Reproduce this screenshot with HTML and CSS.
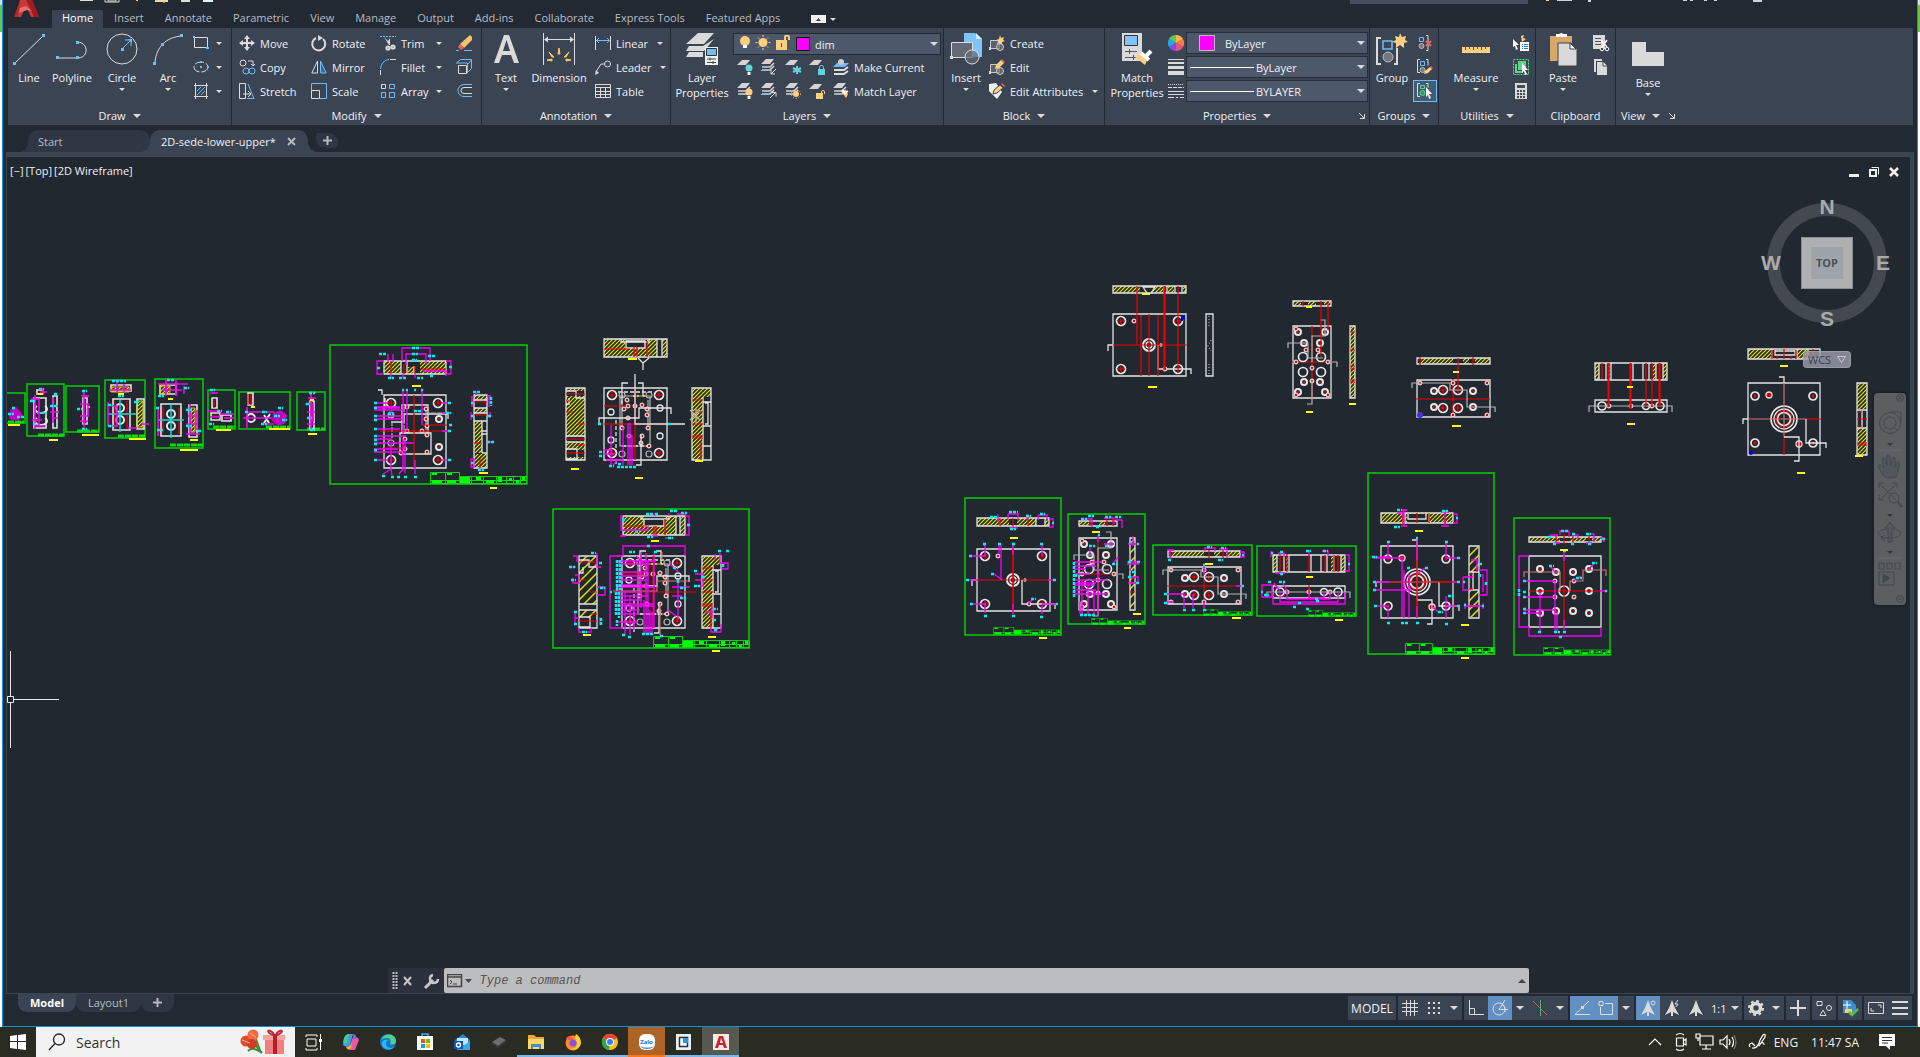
FILE: index.html
```html
<!DOCTYPE html>
<html lang="en">
<head>
<meta charset="utf-8">
<title>2D-sede-lower-upper</title>
<link rel="stylesheet" href="styles.css">
</head>
<body>
<div class="app">
  <header class="titlebar">
    <svg class="logo" viewBox="0 0 26 18" aria-label="Application menu"><path d="M6 0L0 17h6l4-10 4-7z" fill="#b3262a"/><path d="M6 0h12l7 17h-8L12 6 7 17H4z" fill="#c8393b"/><path d="M12 0l3 6 5 11h5L18 0z" fill="#a11c22"/><path d="M6 8l6-2 6 5-5-1-8 3z" fill="#e4716c"/></svg>
    <svg class="qat" width="140" height="4"><path d="M0 0h13v1H0zM75 0h13v2H75zM101 0h9v2H101z" fill="#dcdcdc"/><path d="M25 0v2h14V0M28 0v1h8V0" stroke="#dcdcdc" fill="none"/><path d="M56 0h2v1h-2zM75 0h8v1h-8zM81 0l3 3 3-3z" fill="#ffce72"/><path d="M123 0h10v2h-10z" fill="#dff0ff"/></svg>
    <div class="help-search"></div>
    <svg class="qat" width="220" height="4"><path d="M18 0h3v1h-3z" fill="#ffce72"/><path d="M29 0h15v1H29zM60 0h3v2h-3zM155 0h4v1h-4zM162 0h3v1h-3zM176 0h3v1h-3zM186 0h3v1h-3zM225 0h9v2h-9z" fill="#cfd2d6"/></svg>
  </header>
  <nav class="tabs">
    <button class="tab on">Home</button><button class="tab">Insert</button><button class="tab">Annotate</button><button class="tab">Parametric</button><button class="tab">View</button><button class="tab">Manage</button><button class="tab">Output</button><button class="tab">Add-ins</button><button class="tab">Collaborate</button><button class="tab">Express Tools</button><button class="tab">Featured Apps</button>
    <button class="minribbon" aria-label="Minimize ribbon"><svg width="15" height="8"><path d="M0 0h15v8H0z" fill="#f0f0f0"/><path d="M5 6l2.5-3L10 6z" fill="#444"/></svg><i class="arr"></i></button>
  </nav>

  <section class="ribbon">
    <div class="panel p-draw">
      <div class="body">
        <button class="big w40"><svg class="i32"><path class="l" d="M2 30L30 3"/><path class="b" d="M0 29h3v3H0zM29 1h3v3h-3z"/></svg><span>Line</span></button>
        <button class="big w46"><svg class="i32"><path class="l" d="M2 25h19M21 9c12 0 12 16 1 16"/><path class="b" d="M0 23h3v3H0zM20 23h3v3h-3zM20 8h3v3h-3z"/></svg><span>Polyline</span></button>
        <button class="big w54"><svg class="i32"><circle class="l" cx="16" cy="16" r="15"/><path class="bl" d="M16 16l8-8M19 7h6v6"/><path class="b" d="M15 15h3v3h-3zM22 6h4v4z"/></svg><span>Circle</span><i class="arr"></i></button>
        <button class="big w38"><svg class="i32"><path class="l" d="M3 30C4 14 14 4 30 3"/><path class="b" d="M1 29h3v3H1zM9 10h3v3H9zM28 1h3v3h-3z"/></svg><span>Arc</span><i class="arr"></i></button>
        <div class="col c-draw">
          <button class="sm"><svg class="i16"><path class="l" d="M1.500 2.500h13v10h-13z"/><path class="b" d="M0 1h2v2H0zM13 12h3v2h-3z"/></svg><i class="arr"></i></button>
          <button class="sm"><svg class="i16"><ellipse class="l" cx="8" cy="8" rx="7" ry="5" stroke-dasharray="9 2"/><path class="b" d="M7 2h2v2H7zM7 7h2v2H7zM14 7h2v2h-2z"/></svg><i class="arr"></i></button>
          <button class="sm"><svg class="i16"><path class="l" d="M1 2.500h14M1 13.500h14M2.500 0v16M13.500 0v16"/><path class="bl" d="M4 8l4-4M4 12l8-8M8 12l4-4"/></svg><i class="arr"></i></button>
        </div>
      </div>
      <button class="ptitle">Draw<i class="arr lg"></i></button>
    </div>

    <div class="panel p-modify">
      <div class="body">
        <div class="col w72">
          <button class="sm"><svg class="i16"><path class="l2" d="M8 1v14M1 8h14"/><path class="g" d="M8 0l3 4H5zM8 16l3-4H5zM0 8l4-3v6zM16 8l-4-3v6z"/></svg>Move</button>
          <button class="sm"><svg class="i16"><circle class="l" cx="4" cy="4" r="3"/><path class="l" d="M9 2h5v4M12 5l2 2 2-2"/><circle class="bl" cx="7" cy="12" r="3"/><circle class="bl" cx="13" cy="12" r="3"/></svg>Copy</button>
          <button class="sm"><svg class="i16"><path class="l" d="M.5.5h6v15h-6zM4 11h7M9 8l3 3-3 3"/><path class="bl" d="M9 1l6 14.500H8"/></svg>Stretch</button>
        </div>
        <div class="col w69">
          <button class="sm"><svg class="i16"><path class="l2" d="M5 3a6.500 6.500 0 1 0 7 1"/><path class="g" d="M7 0l5 3-5 3z"/></svg>Rotate</button>
          <button class="sm"><svg class="i16"><path class="l" d="M6.500 2v12H.8z"/><path class="bl" fill="#376a94" d="M9.500 2v12h5.700z"/></svg>Mirror</button>
          <button class="sm"><svg class="i16"><path class="bl" d="M.5 7V.5h15v15H9"/><path class="l" d="M.5 7.500h8v8h-8z"/></svg>Scale</button>
        </div>
        <div class="col w76">
          <button class="sm"><svg class="i16"><path class="bl" d="M0 1.500h16" stroke-dasharray="2 1"/><path class="g" d="M4 2l5 8 1 0V3l-2 3z"/><circle class="l2" cx="8" cy="13" r="1.600"/><circle class="l2" cx="13" cy="12" r="1.600"/></svg>Trim<i class="arr push"></i></button>
          <button class="sm"><svg class="i16"><path class="bl" d="M.5 10C1 5 4 1 9 .5"/><path class="l" d="M10 .5h6M.5 11v5"/></svg>Fillet<i class="arr push"></i></button>
          <button class="sm"><svg class="i16"><path class="l" d="M1.500 1.500h4v4h-4z"/><path class="bl" d="M9.500 1.500h5v4h-5zM1.500 9.500h4v5h-4zM9.500 9.500h5v5h-5z"/></svg>Array<i class="arr push"></i></button>
        </div>
        <div class="col">
          <button class="sm"><svg class="i16"><path d="M14 0l2 2v3l-8 8-4-4z" fill="#f5c36c"/><path d="M4 9l4 4-3 2-3-3z" fill="#f0625f"/><path class="bl" d="M0 15.500h3M8 15.500h8"/></svg></button>
          <button class="sm"><svg class="i16"><path class="l" d="M2.500 6.500h8v8h-8z"/><path class="bl" d="M.5 4l4-3.500h11v9l-4 4M12 5l3.500-4M.5 4h11v10"/></svg></button>
          <button class="sm"><svg class="i16"><path class="bl" d="M16 1.500H8a6 6 0 0 0 0 12h8"/><path class="l" d="M16 4.500H8a3 3 0 0 0 0 6h8"/></svg></button>
        </div>
      </div>
      <button class="ptitle">Modify<i class="arr lg"></i></button>
    </div>

    <div class="panel p-annot">
      <div class="body">
        <button class="big w46"><svg class="i32"><path class="g" d="M14 2h5l10 28h-5l-3-8h-9l-3 8H4zm2.500 5L13 18h7z"/></svg><span>Text</span><i class="arr"></i></button>
        <button class="big w60"><svg class="i32"><path class="l" d="M.5 0v32M31.500 0v32M3 6.500h26"/><path class="g" d="M1 6.500l4-3v6zM31 6.500l-4-3v6z"/><path d="M15 21l1-6 1 6zM11 24l-5-5 3 5zM21 24l5-5-3 5zM9 28l-5-1 5-1zM23 28l5-1-5-1z" fill="#ffc766" stroke="#ffc766"/></svg><span>Dimension</span></button>
        <div class="col">
          <button class="sm"><svg class="i16"><path class="l" d="M.5 1v14M15.500 1v14"/><path class="bl" d="M1 5.500h14M4 3L1.500 5.500 4 8M12 3l2.500 2.500L12 8"/></svg>Linear<i class="arr"></i></button>
          <button class="sm"><svg class="i16"><circle class="l" cx="12.500" cy="5" r="3"/><path class="l" d="M9.500 5H6L1 13"/><path class="g" d="M0 16l1-5 3 3z"/></svg>Leader<i class="arr"></i></button>
          <button class="sm"><svg class="i16"><path class="l" d="M.5 1.500h15v13H.5zM0 4.500h16M0 8.500h16M0 11.500h16M5.500 5v10M10.500 5v10"/></svg>Table</button>
        </div>
      </div>
      <button class="ptitle">Annotation<i class="arr lg"></i></button>
    </div>

    <div class="panel p-layers">
      <div class="body">
        <button class="big w60"><svg class="i32"><path class="g" d="M12 0h16L18 11H0zM3 13h14l11-7-10 12H0zM3 19h14v5H0z"/><path d="M19 14h13v18H19z" fill="#efefef"/><path d="M20.500 15.500h10v7h-10z" fill="#6fbdf8" stroke="#333"/><path d="M21 26h9M21 29.500h9M24 24.500v3M27 28v3" stroke="#444"/></svg><span>Layer<br>Properties</span></button>
        <div class="stack">
          <label class="combo"><svg width="74" height="18"><circle cx="6" cy="6" r="5" fill="#ffcf80"/><path d="M4 10h4v3H4z" fill="#fff"/><circle cx="24" cy="7.500" r="4.500" fill="#ffcf80"/><path d="M24 0v2M24 13v2M16.500 7.500h2M29.500 7.500h2M19 2.500l1 1M28 11.500l1 1M29 2.500l-1 1M20 11.500l-1 1" stroke="#ffcf80"/><path d="M37 5h11v10H37zM42 8v4h1V8z" fill="#ffcf80" fill-rule="evenodd"/><path d="M46 5V2.500q0-2 2-2t2 2V5" fill="none" stroke="#ffcf80" stroke-width="2"/><path d="M57.500 2.500h13v13h-13z" fill="#f0f" stroke="#111"/></svg><select aria-label="Layer"><option>dim</option></select><i class="arr lg"></i></label>
          <div class="row">
            <button class="ic"><svg class="i16"><use href="#lay1"/><circle cx="12" cy="9" r="3.500" fill="#63d3dc"/><path d="M10.500 13h3v3h-3z" fill="#fff"/></svg></button>
            <button class="ic"><svg class="i16"><use href="#lay3"/><path class="bl" d="M0 11.500h9"/><path class="l" d="M15 10l-5 5M10 11v4h4"/></svg></button>
            <button class="ic"><svg class="i16"><use href="#lay1"/><path d="M12 7v8M8 9l8 4M16 9l-8 4" stroke="#63d3dc" stroke-width="2"/></svg></button>
            <button class="ic"><svg class="i16"><use href="#lay1"/><path d="M9 10h7v6H9z" fill="#63d3dc"/><path d="M10.500 10V8.500a2 2 0 0 1 4 0V10" stroke="#63d3dc" fill="none"/></svg></button>
            <button class="sm"><svg class="i16"><path d="M0 8L4 4h12l-4 4z" fill="#6fbdf8"/><circle cx="8" cy="3" r="3" fill="#ccc"/><path class="l2" d="M1 11h10l4-3M1 15h10l4-3"/></svg>Make Current</button>
          </div>
          <div class="row">
            <button class="ic"><svg class="i16"><use href="#lay3"/><circle cx="12" cy="9" r="3.500" fill="#ffcf80"/><path d="M10.500 13h3v3h-3z" fill="#fff"/></svg></button>
            <button class="ic"><svg class="i16"><use href="#lay3"/><path class="bl" d="M0 11.500h9"/><path class="l" d="M9 15l5-5M10 9.500h5v4"/></svg></button>
            <button class="ic"><svg class="i16"><use href="#lay3"/><circle cx="11" cy="11" r="3" fill="#ffcf80"/><circle cx="11" cy="11" r="4.500" stroke="#ffcf80" fill="none" stroke-dasharray="1 2"/></svg></button>
            <button class="ic"><svg class="i16"><use href="#lay1"/><path d="M7 10h7v6H7z" fill="#ffcf80"/><path d="M12.500 10V9a1.500 1.500 0 0 1 3 0v2" stroke="#ffcf80" fill="none"/></svg></button>
            <button class="sm"><svg class="i16"><use href="#lay3"/><path d="M8 8l3-1 4 4-2 4z" fill="#ffcf80"/><path d="M9 7l3 3 3-2" stroke="#fff" stroke-width="2" fill="none"/></svg>Match Layer</button>
          </div>
        </div>
      </div>
      <button class="ptitle">Layers<i class="arr lg"></i></button>
    </div>

    <div class="panel p-block">
      <div class="body">
        <button class="big w42"><svg class="i32"><path d="M14 0h11l7 6v18H14z" fill="#7cc4fa"/><path d="M26 0v6h6z" fill="#d6ecff"/><path d="M1.500 9.500h21v15h-21z" fill="#646975" stroke="#ddd"/><circle cx="22" cy="24" r="7" fill="#646975" fill-opacity=".7" stroke="#ddd"/><path class="g" d="M0 23h3v3H0z"/></svg><span>Insert</span><i class="arr"></i></button>
        <div class="col">
          <button class="sm"><svg class="i16"><use href="#blk"/><path d="M11 0l1 3 3-1-1 3 2 1-3 1 0 3-2-2-3 1 1-3-2-1 3-1z" fill="#ffcf80"/></svg>Create</button>
          <button class="sm"><svg class="i16"><use href="#blk"/><path d="M6 10l1-4 5-5 3 3-5 5z" fill="#ffcf80"/><path d="M12 1l1-1 3 3-1 1z" fill="#f0625f"/></svg>Edit</button>
          <button class="sm"><svg class="i16"><path d="M0 1l7-1 6 9-5 7-8-8z" fill="#eee"/><path d="M4 11l1-4 6-5 3 3-6 5z" fill="#ffcf80" stroke="#3b4453"/><path d="M12 1l1-1 3 3-1 1z" fill="#f0625f"/></svg>Edit Attributes<i class="arr"></i></button>
        </div>
      </div>
      <button class="ptitle">Block<i class="arr lg"></i></button>
    </div>

    <div class="panel p-props">
      <div class="body">
        <button class="big w62"><svg class="i32"><path class="g" d="M1 0h20v28H1z"/><path d="M3.500 2.500h13v10h-13z" fill="#7cc4fa" stroke="#333"/><path d="M4 18.500h12M4 24.500h12M8.500 16v5M12.500 22v5" stroke="#555"/><path d="M14 24l7-5 6 6-3 7z" fill="#ffcf80"/><path d="M20 20l8 7M25 23l5-5" stroke="#fff" stroke-width="4"/></svg><span>Match<br>Properties</span></button>
        <div class="col tight">
          <svg class="i16"><path d="M8 8V0a8 8 0 0 1 7 4z" fill="#ffb545"/><path d="M8 8l7-4a8 8 0 0 1 0 8z" fill="#ff7b45"/><path d="M8 8l7 4a8 8 0 0 1-7 4z" fill="#ef4f7f"/><path d="M8 8v8a8 8 0 0 1-7-4z" fill="#7d4df0"/><path d="M8 8l-7 4a8 8 0 0 1 0-8z" fill="#22a7e8"/><path d="M8 8L1 4a8 8 0 0 1 7-4z" fill="#5cc95c"/></svg>
          <svg class="i16"><path class="g" d="M0 0h16v1H0zM0 3h16v2H0zM0 7h16v3H0zM0 12h16v4H0z"/></svg>
          <svg class="i16"><path class="l" d="M0 1.500h16" stroke-dasharray="1 1"/><path class="l" d="M0 4.500h16" stroke-dasharray="4 1"/><path class="l" d="M0 8.500h16M0 11.500h16"/><path class="l" d="M0 14.500h16" stroke-dasharray="6 2 2 2"/></svg>
        </div>
        <div class="col combos">
          <label class="combo"><i class="swatch"></i><select aria-label="Colour"><option>ByLayer</option></select><i class="arr lg"></i></label>
          <label class="combo"><i class="rule"></i><select aria-label="Lineweight"><option>ByLayer</option></select><i class="arr lg"></i></label>
          <label class="combo"><i class="rule"></i><select aria-label="Linetype"><option>BYLAYER</option></select><i class="arr lg"></i></label>
        </div>
      </div>
      <button class="ptitle">Properties<i class="arr lg"></i></button>
      <button class="launch" aria-label="Properties dialog"><svg width="6" height="6"><path class="l" d="M0 0l5 5M5.500 1v4.500H1"/></svg></button>
    </div>

    <div class="panel p-groups">
      <div class="body">
        <button class="big w42"><svg class="i32"><path class="l2" d="M5 5H1v26h4M18 31h3V15" stroke="#fff"/><path class="bl" stroke-width="1.500" d="M7 8h9v8H7z"/><circle cx="12" cy="24" r="5" fill="#73777f" stroke="#bbb"/><path d="M24 0l2 4 4-1-1 4 3 2-4 1 0 5-4-3-4 3 0-5-4-1 4-2-1-4 4 1z" fill="#ffcf80"/></svg><span>Group</span></button>
        <div class="col">
          <button class="ic"><svg class="i16"><use href="#grp"/><path class="l" d="M9 .5h2v15H9"/><path d="M9 6l5 5M14 6l-5 5" stroke="#f0625f" stroke-width="2"/></svg></button>
          <button class="ic"><svg class="i16"><path class="l" d="M3 .5H.5v13H3M9 .5h2v6"/><use href="#grp" x="1"/><path d="M7 15l1-3 5-4 2 2-4 4z" fill="#ffcf80"/><path d="M13 8l1-1 2 2-1 1z" fill="#f0625f"/></svg></button>
          <button class="ic on"><svg class="i16"><path class="l" d="M3 .5H.5v13H3M9 .5h2v4"/><path d="M3.500 2.500h4v3h-4z" fill="none" stroke="#5fd38a"/><circle cx="5.500" cy="10" r="2.500" fill="#3f8f60" stroke="#5fd38a"/><path d="M9 4l6 7h-3l2 4-2 1-1-4-2 2z" fill="#fff"/></svg></button>
        </div>
      </div>
      <button class="ptitle">Groups<i class="arr lg"></i></button>
    </div>

    <div class="panel p-util">
      <div class="body">
        <button class="big w72"><svg class="i32"><path d="M2 14h28v6H2z" fill="#ffcf80"/><path d="M5.500 14v3M9.500 14v2M13.500 14v3M17.500 14v2M21.500 14v3M25.500 14v2" stroke="#5d5137"/></svg><span>Measure</span><i class="arr"></i></button>
        <div class="col">
          <button class="sm"><svg class="i16"><path d="M8 1l3-1-1 3 3 1-4 3z" fill="#ffcf80"/><path d="M0 4l6 6H3l2 4-2 1-1-4-2 1z" fill="#fff"/><path d="M7 7h9v9H7z" fill="#fff"/><path d="M9 9.500h1M11 9.500h4M9 11.500h1M11 11.500h4M9 13.500h1M11 13.500h4" stroke="#2c7cc4"/></svg></button>
          <button class="sm"><svg class="i16"><path d="M.5.5h15v15H.5z" fill="none" stroke="#5fd38a" stroke-dasharray="2 1"/><path d="M5 2h8v9H5z" fill="#5fd38a"/><path d="M3 5v8h7" stroke="#5fd38a" fill="none" stroke-width="2"/><path d="M9 4l6 7h-3l2 4-2 1-1-4-2 2z" fill="#fff"/></svg></button>
          <button class="sm"><svg class="i16"><path class="g" d="M2 0h12v16H2z"/><path d="M4 2h8v3H4zM4 7h2v2H4zM7 7h2v2H7zM10 7h2v2h-2zM4 10h2v2H4zM7 10h2v2H7zM10 10h2v2h-2zM4 13h2v2H4zM7 13h2v2H7zM10 13h2v2h-2z" fill="#444c59"/></svg></button>
        </div>
      </div>
      <button class="ptitle">Utilities<i class="arr lg"></i></button>
    </div>

    <div class="panel p-clip">
      <div class="body">
        <button class="big w52"><svg class="i32"><path d="M3 3h22v25H3z" fill="#d9a868"/><path d="M9 4V1h3l2-1 3 1h3v3z" fill="#fff"/><path d="M11 10h13l6 6v17H11z" fill="#d9d9d9" stroke="#3b4453"/><path d="M23 10v6h6z" fill="#fff" stroke="#3b4453"/></svg><span>Paste</span><i class="arr"></i></button>
        <div class="col">
          <button class="sm"><svg class="i16"><path class="g" d="M0 0h12v14H0z"/><path d="M2 3.500h6M2 6.500h6M2 9.500h6" stroke="#555"/><path d="M8 5l6 7M14 5l-5 7" stroke="#fff" stroke-width="1.500"/><circle cx="9" cy="14" r="1.800" stroke="#fff" fill="#3b4453"/><circle cx="14" cy="14" r="1.800" stroke="#fff" fill="#3b4453"/></svg></button>
          <button class="sm"><svg class="i16"><path class="g" d="M1 0h8v2H3v11H1z"/><path class="g" d="M4 3h6l4 4v9H4z"/><path d="M10 3v4h4" stroke="#3b4453" fill="#fff"/></svg></button>
        </div>
      </div>
      <div class="ptitle">Clipboard</div>
    </div>

    <div class="panel p-view">
      <div class="body">
        <button class="big w62 base"><svg class="i32"><path class="g" d="M0 4h14v10h18v14H0z"/></svg><span>Base</span><i class="arr"></i></button>
      </div>
      <div class="ptitle lead"><button>View<i class="arr lg"></i></button><button aria-label="View dialog"><svg width="6" height="6"><path class="l" d="M0 0l5 5M5.500 1v4.500H1"/></svg></button></div>
    </div>
  </section>

  <nav class="files">
    <button class="ftab">Start</button>
    <button class="ftab on">2D-sede-lower-upper*<svg width="9" height="9"><path d="M1 1l7 7M8 1L1 8" stroke="#b4b8be" stroke-width="2"/></svg></button>
    <button class="fadd" aria-label="New tab"><svg width="9" height="9"><path d="M4.500 0v9M0 4.500h9" stroke="#b4b8be" stroke-width="2"/></svg></button>
  </nav>

  <main class="canvas">
    <svg class="drawing" role="img" aria-label="Mould plate drawings">
      <defs>
        <g id="lay1"><path d="M0 6l5-5h8L9 6z" fill="#d4d4d4"/></g>
        <g id="lay3"><path d="M0 5l5-5h8L9 5z" fill="#d4d4d4"/><path d="M1 8h8l4-4M1 11h8l4-4" stroke="#d4d4d4" stroke-width="1.500" fill="none"/></g>
        <g id="blk"><path d="M1.500 5.500h9v8h-9z" fill="#5c616d" stroke="#ccc"/><circle cx="11" cy="12" r="3.500" fill="#777" fill-opacity=".7" stroke="#ccc"/><path d="M0 12h2v3H0z" fill="#ddd"/></g>
        <g id="grp"><path d="M2.500 2.500h4v4h-4z" fill="none" stroke="#6fbdf8"/><circle cx="4.500" cy="11" r="2.500" fill="#777" stroke="#bbb"/></g>
        <pattern id="h" width="4" height="4" patternUnits="userSpaceOnUse"><path d="M-1 5L5-1M-1 1l2-2M3 5l2-2" stroke="#e6e600" stroke-width="1.200"/></pattern>
        <pattern id="hw" width="9" height="9" patternUnits="userSpaceOnUse"><path d="M-1 10L10-1M-1 1l2-2M8 10l2-2" stroke="#e0e000" stroke-width="1.500"/></pattern>
        <g id="hole"><circle r="4.500" class="w15"/><path class="r" d="M-4 0h8M0-4v8"/></g>
        <g id="big"><circle r="4" class="w15"/><path class="r" d="M-2 0h4M0-2v4"/></g>
        <g id="ring"><circle r="3" class="w2"/><circle r="1" fill="red"/></g>
        <g id="dot"><circle r="1.800" class="p"/></g>
        <symbol id="tb" viewBox="0 0 97 12" preserveAspectRatio="none"><path d="M.5.500h29v11H.5zM15.500.500v11M0 8.500h97M29.500 4.500h67v7H29.500M41.500 4.500v7M53.500 4.500v7M66.500 4.500v7M76.500 4.500v7M83.500 4.500v7M90.500 4.500v7" fill="none" stroke="#00d800"/><path d="M2 1h5v2H2zM17 1h5v2h-5zM2 8h10v3H2zM17 8h9v3h-9zM30 5h10v6H30zM46 5h5v3h-5zM56 8h8v3h-8zM68 5h4v5h-4zM79 6h3v3h-3zM86 8h3v3h-3zM92 5h3v4h-3z" fill="#0f0"/></symbol>

        <g id="plate1">
          <path class="w" d="M1113 314h73v62h-73z"/>
          <use href="#hole" x="1121" y="321"/><use href="#hole" x="1178" y="321"/><use href="#hole" x="1121" y="369"/><use href="#hole" x="1178" y="369"/>
          <circle class="w2" cx="1149" cy="345" r="6"/><circle class="w" cx="1149" cy="345" r="3"/><use href="#dot" x="1134" y="321"/><circle class="w" cx="1161" cy="345" r="1"/>
          <path class="r" d="M1109 345h78M1149 314v62"/>
          <path class="w" d="M1108 351v-6h5M1158 345v24h33v5"/><use href="#dot" x="1165" y="369"/>
        </g>
        <g id="plate2">
          <path class="w" d="M1293 326h38v72h-38z"/>
          <path class="r" d="M1312 326v72M1292 362h40"/>
          <circle class="w15" cx="1303" cy="357" r="4.500"/><circle class="w15" cx="1321" cy="357" r="4.500"/><circle class="w15" cx="1303" cy="372" r="4.500"/><circle class="w15" cx="1321" cy="372" r="4.500"/>
          <use href="#ring" x="1298" y="332"/><use href="#ring" x="1325" y="332"/><use href="#ring" x="1298" y="392"/><use href="#ring" x="1325" y="392"/><use href="#ring" x="1304" y="343"/><use href="#ring" x="1320" y="343"/><use href="#ring" x="1304" y="382"/><use href="#ring" x="1320" y="382"/>
          <use href="#dot" x="1306" y="350"/><use href="#dot" x="1318" y="350"/><use href="#dot" x="1312" y="368"/><use href="#dot" x="1312" y="381"/><use href="#dot" x="1296" y="362"/><use href="#dot" x="1328" y="362"/><use href="#dot" x="1296" y="329"/><use href="#dot" x="1328" y="395"/><use href="#dot" x="1296" y="395"/>
          <path class="gr" d="M1288 348v-5h20v15h15M1312 362v-26h13v-16h-5M1328 362h9v5M1312 380v24h-5"/>
        </g>
        <g id="plate3">
          <path class="w" d="M1417 380h73v37h-73z"/>
          <path class="r" d="M1416 399h74M1453 379v39"/>
          <use href="#hole" x="1443" y="390"/><use href="#hole" x="1458" y="390"/><use href="#hole" x="1443" y="408"/><use href="#hole" x="1458" y="408"/>
          <use href="#ring" x="1434" y="391"/><use href="#ring" x="1473" y="391"/><use href="#ring" x="1434" y="407"/><use href="#ring" x="1473" y="407"/>
          <use href="#dot" x="1420" y="383"/><use href="#dot" x="1453" y="383"/><use href="#dot" x="1487" y="383"/><use href="#dot" x="1420" y="415"/><use href="#dot" x="1453" y="415"/><use href="#dot" x="1487" y="415"/>
          <path class="gr" d="M1412 388v-5h38v7h17v17h28v5"/>
        </g>
        <g id="plate4">
          <path class="w" d="M1595 400h72v12h-72z"/><circle class="w15" cx="1602" cy="406" r="4"/><circle class="w15" cx="1646" cy="406" r="3.500"/><circle class="w15" cx="1660" cy="406" r="4"/>
          <use href="#dot" x="1609" y="406"/><use href="#dot" x="1631" y="406"/><use href="#dot" x="1652" y="406"/><path class="gr" d="M1589 412v-6h83v6"/>
        </g>
        <g id="sec4"><path fill="url(#h)" d="M1595 363h4v17h-4zM1608 363h2v17h-2zM1653 363h3v17h-3zM1663 363h4v17h-4z"/><path class="w" d="M1595 363h72v17h-72zM1599 363v17M1606 363v17M1611 363v17M1633 363v17M1643 363v17M1649 363v17M1656 363v17M1663 363v17"/></g>
        <g id="plate5">
          <path class="w" d="M1748 383h72v72h-72z"/><circle class="w15" cx="1784" cy="419" r="13"/><circle class="w" cx="1784" cy="419" r="10"/><circle class="r" cx="1784" cy="419" r="8"/><circle class="w15" cx="1784" cy="419" r="6.500"/>
          <use href="#big" x="1755" y="396"/><use href="#big" x="1813" y="396"/><use href="#big" x="1755" y="443"/><use href="#big" x="1813" y="443"/><circle class="p" cx="1769" cy="395" r="3"/><circle class="p" cx="1799" cy="444" r="3"/>
          <path class="r" d="M1784 437v18M1806 419h15"/><path class="pk" d="M1784 383v54M1748 419h58"/><path class="w" d="M1743 424v-5h5M1784 383v-6h-5M1806 419v24h20v5M1784 437h15v24h-5"/>
        </g>
        <g id="sec5"><path fill="url(#h)" d="M1748 349h23v10h-23zM1797 349h11v10h-11z"/><path class="w" d="M1748 349h72v10h-72zM1775 350v5h20v-5M1775 351h20M1772 349v10M1797 349v10M1808 349v10"/><path class="r" d="M1772 350v9M1784 349v10M1796 350v9M1777 356v3M1791 356v3M1813 349v10"/></g>
        <g id="side5"><path fill="url(#h)" d="M1857 383h10v26h-10zM1857 428h10v27h-10z"/><path class="w" d="M1857 383h10v72h-10zM1857 410h10M1857 428h10M1862 411v16"/><path class="r" d="M1857 419h10M1857 412h5M1857 426h5M1857 443h10M1857 445h10"/></g>
        <g id="core">
          <path class="w" d="M604 388h63v72h-63z"/><path class="gr" d="M620 396h30v50h-30zM622 400v28M648 400v28"/><path class="w" stroke-dasharray="4 2" d="M618 392h36M622 446h28M616 420v34"/>
          <use href="#hole" x="612" y="395"/><use href="#hole" x="659" y="395"/><use href="#hole" x="612" y="453"/><use href="#hole" x="659" y="453"/>
          <circle class="w" cx="611" cy="412" r="3"/><circle class="w" cx="660" cy="408" r="3"/><circle class="w" cx="611" cy="440" r="3"/><circle class="w" cx="660" cy="436" r="3"/><circle class="gr" cx="622" cy="395" r="3"/><circle class="gr" cx="649" cy="395" r="3"/><circle class="gr" cx="622" cy="454" r="3"/><circle class="gr" cx="649" cy="454" r="3"/>
          <use href="#dot" x="628" y="406"/><use href="#dot" x="642" y="405"/><use href="#dot" x="627" y="400"/><use href="#dot" x="647" y="409"/><use href="#dot" x="647" y="415"/><use href="#dot" x="624" y="409"/><use href="#dot" x="628" y="418"/><use href="#dot" x="622" y="428"/><use href="#dot" x="648" y="428"/><use href="#dot" x="642" y="436"/><use href="#dot" x="629" y="436"/><use href="#dot" x="641" y="443"/><use href="#dot" x="649" y="446"/><use href="#dot" x="635" y="406"/>
          <path class="r" d="M635 388v72M600 424h78M604 406h22"/><path d="M633 396h2M637 396h2M643 396h2" stroke="#fb0" stroke-width="2"/>
          <path class="w" d="M599 423v-5h40v-10h32v6M622 404v-21h6M643 396v-13h-5M641 434v31h-5M616 460v4"/>
        </g>
        <g id="side"><path fill="url(#h)" d="M692 388h19v9h-19zM692 397h11v63h-11z"/><path class="w" d="M692 388h19v72h-19zM703 397v63M703 402h8M705 403h3v21h-3M703 426h8M703 446h8"/><path class="r" d="M692 400h11M692 412h11M692 424h11M692 436h11M692 438h11M701 442v18"/></g>
      </defs>

      <g class="sheets" transform="translate(-7 -157)">
        <!-- sheet frames and title blocks -->
        <path class="f" d="M0 393h25v30H0M27 384h37v52H27zM66 386h33v46H66zM105 380h40v58h-40zM155 379h48v69h-48zM208 390h27v39h-27zM239 392h51v37h-51zM297 392h28v38h-28zM330 345h197v139H330zM553 509h196v139H553zM965 498h96v137h-96zM1068 514h77v110h-77zM1153 545h99v70h-99zM1257 546h99v70h-99zM1368 473h126v181h-126zM1514 518h96v137h-96z"/>
        <use href="#tb" x="430" y="472" width="97" height="12"/><use href="#tb" x="653" y="636" width="97" height="12"/><use href="#tb" x="993" y="627" width="68" height="8"/><use href="#tb" x="1091" y="618" width="54" height="7"/><use href="#tb" x="1203" y="609" width="49" height="7"/><use href="#tb" x="1308" y="610" width="48" height="7"/><use href="#tb" x="1405" y="643" width="90" height="12"/><use href="#tb" x="1543" y="647" width="68" height="8"/>
        <path d="M38 435h26M77 431h22M118 436h27M170 445h33M213 427h22M266 427h24M307 429h18M8 422h16" stroke="#00e000" stroke-width="3" stroke-dasharray="6 1"/>

        <!-- small part sheets, left -->
        <g class="dense">
        <path class="w" d="M34 398h12v30H34zM37 390h6v4h-6zM53 396h4v32h-4zM83 398h4v26h-4zM111 385h20v6h-20zM113 399h17v31h-17zM137 399h7v30h-7zM160 385h16v9h-16zM161 404h20v32h-20zM189 405h8v32h-8zM212 398h5v10h-5zM211 413h9v7h-9zM222 415h9v6h-9zM248 393h5v12h-5zM310 401h4v28h-4z"/>
        <path class="w2" d="M37 406a6 4 0 1 0 8 0M37 418a6 4 0 1 0 8 0M264 415l5 8M264 423l6-9M86 407h4"/>
        <circle class="w2" cx="120" cy="408" r="4"/><circle class="w2" cx="120" cy="420" r="4"/><circle class="w2" cx="171" cy="414" r="4"/><circle class="w2" cx="171" cy="426" r="4"/><circle class="w2" cx="251" cy="418" r="4"/>
        <path fill="url(#h)" stroke="#cc0" d="M137 401h6v26h-6zM111 387h18v5h-18zM160 386h10v8h-10zM191 408h4v24h-4z"/>
        <path class="r" d="M115 401v28M127 401v28M113 414h18M163 407v26M179 408v26M248 394v11M251 394v11M214 399v9M212 416h8M224 418h10M83 422h4"/>
        <path class="c1" d="M108 414h28M120 400v32M158 420h26M171 404v34M37 413h10"/>
        <path class="m" d="M35 395v34M31 399h8v26M43 388v7M53 397v26M50 406h8M50 412h9M52 418h6M32 420h10M36 426h9M40 392h7M81 396h8M84 390v38M80 421h8M80 404h8v12h-8M109 390h22M117 382v10M110 426h8M128 428h9M141 424h8M108 402v24M111 406h6v20M124 384v8M158 384h30M166 380v16M176 380v16M184 386v8M158 408v28M162 390h20M188 416h10M197 410v20M186 424h12M186 434h14M190 404v30M210 393h8M208 411h14M210 417h10M220 414h14M224 418h10M247 407v22M243 418h18M246 412h12M258 412h16M258 418h14M262 424h12M308 398h8M311 394v36M305 404h8v18M307 412h8M307 424h8"/>
        <path d="M10 410l6-3 5 5 2 5-6 4-8-2zM273 413l8-3 6 5-1 8-8 3-6-5z" fill="#c400c4"/>
        <path class="c" d="M8 414h6M12 408h4M17 417h7M30 401h5M39 389h5M33 424h5M50 406h8M54 394h4M82 391h5M77 409h5M82 429h5M112 381h14M108 405h5M118 396h6M108 426h5M134 402h5M158 396h6M167 380h8M184 388h5M156 408h4M157 430h6M186 410h6M186 426h6M198 431h3M210 390h5M217 411h5M209 424h5M226 412h5M245 412h4M262 412h5M261 424h6M274 416h6M278 408h5M282 420h5M309 393h6M306 404h3M307 418h5M310 430h5"/>
        <path class="y" d="M8 425h12M49 440h9M82 435h17M129 439h17M180 450h18M190 440h8M216 430h15M269 429h21M308 434h9M38 394h5M118 394h6M168 399h5M251 407h4M310 400h4"/>
        </g>

        <!-- lower core sheet -->
        <path fill="url(#h)" d="M384 361h17v13h-17zM408 367h6v7h-6zM420 361h26v13h-26z"/>
        <path class="w" d="M384 361h62v13h-62zM401 361v13M407 361v13M414 366v8M384 395h62v73h-62zM402 405h26v28h-26zM400 433h31v21h-31zM385 398v10M382 395v-5h-4M391 422h13v-8h44v5"/>
        <path class="gr" d="M404 407v26M426 407v26M392 415v24M425 413h20" stroke-dasharray="5 1"/>
        <use href="#hole" x="391" y="403"/><use href="#hole" x="438" y="403"/><use href="#hole" x="391" y="460"/><use href="#hole" x="438" y="460"/><use href="#ring" x="439" y="419"/><use href="#ring" x="439" y="447"/><circle class="gr" cx="391" cy="415" r="3"/><circle class="gr" cx="391" cy="443" r="3"/>
        <use href="#dot" x="407" y="407"/><use href="#dot" x="426" y="409"/><use href="#dot" x="426" y="419"/><use href="#dot" x="427" y="426"/><use href="#dot" x="422" y="431"/><use href="#dot" x="407" y="431"/><use href="#dot" x="427" y="435"/><use href="#dot" x="405" y="439"/><use href="#dot" x="405" y="449"/><use href="#dot" x="427" y="452"/><use href="#dot" x="401" y="453"/>
        <path class="r" d="M414 395v73M380 431h70M422 425h25M384 448h22M391 361v13M404 365v9M415 366v8M422 369h24"/>
        <path class="m" d="M402 361v-13h28v13M406 365v-11h20v10M384 361h-7v13h7M446 361h5v13h-5M423 371h23v5M388 354v8M393 354v8M391 374v4M403 374v4M415 374v4M374 403h14M374 407h26M374 408h26M374 410h28M374 416h28M374 419h28M374 429h26M374 436h32M374 439h18M374 443h18M374 443h40M374 449h24M374 452h28M376 460h12M403 391v42M407 391v40M422 391v34M391 443v26l-8 5M391 469l1 6M405 439v34M403 439v30l-4 5M415 460v14M442 403h8M442 413h8M442 431h8M442 460h8"/>
        <path class="c" d="M379 354h8M412 348h8M412 354h6M412 360h5M428 356h7M377 368h4M449 367h3M388 378h6M399 378h8M417 378h6M430 376h4M374 403h4M374 408h4M374 416h4M374 420h4M374 429h4M374 436h4M374 440h4M374 444h4M374 450h4M374 460h4M402 390h2M406 390h2M414 390h2M421 390h2M448 403h4M446 413h5M449 425h3M448 431h4M448 460h4M382 476h3M391 477h3M397 477h3M404 477h3M414 477h3M388 414h6M414 411h7"/>
        <path fill="url(#h)" d="M474 395h13v5h-13zM474 408h13v5h-13zM474 421h8v32h-8zM474 454h13v14h-13z"/>
        <path class="w" d="M474 395h13v73h-13zM474 400h13M474 408h13M474 413h13M482 421v32M474 421h13M482 431h5M482 434h5M482 453h5"/>
        <path class="r" d="M474 402h13M474 415h13M474 443h8M480 459v9"/>
        <path class="m" d="M471 397h3M472 397v10M489 395v12M471 412v8M490 412v6M471 459h3v8h-3zM476 391v4M487 442h5M487 396h4M480 468v3"/>
        <path class="c" d="M473 392h7M471 403h3M491 397v9M471 416h3M488 416h4M487 442h7M471 463h3M478 470h6"/>
        <path class="y" d="M412 386h9M479 473h9M490 488h7"/>

        <!-- core, undimensioned -->
        <path fill="url(#h)" d="M604 339h63v18h-63z"/><path fill="#212830" d="M625 339h22v9h-22zM657 339h5v18h-5z"/>
        <path class="w" d="M604 339h63v18h-63zM621 339v3h28v-3M626 341h19v7h-19zM657 339v18M662 339v18M638 358l5 5v7M649 358l-6 5"/>
        <path class="r" d="M604 349h26M634 347v10M637 347v10M647 341v16"/>
        <use href="#core"/>
        <path class="w" d="M635 374v50h50"/>
        <path class="m" d="M611 425v40M623 427v38M628 423v42M630 423v42M632 435v30M603 450h9M603 454h12M606 460h12M622 460h-5l-4 6"/>
        <path class="c" d="M599 452h5M599 456h5M609 466h5M617 467h15M618 464h4M633 467h4M598 424h4M668 424h4"/>
        <path fill="url(#h)" d="M566 388h19v3h-19zM566 396h19v41h-19zM566 442h19v8h-19zM566 457h19v3h-19z"/>
        <path class="w" d="M566 388h19v72h-19zM566 391h10v7h9M569 398v6h-3M566 436h19M566 442h19M566 449h11v10h-11"/><path class="r" d="M566 394h19M566 401h4M566 412h7M578 424h7M566 439h19M578 445h7M566 453h19"/>
        <use href="#side"/><path class="gr" d="M690 410l10 10M700 410l-10 10M696 408v16"/>
        <path class="y" d="M628 359h9M571 469h8M635 478h8M695 461h8"/>

        <!-- core sheet, dimensioned -->
        <path fill="url(#h)" d="M623 516h62v19h-62z"/><path fill="#212830" d="M644 516h21v10h-21zM676 516h4v19h-4z"/><path class="w" d="M623 516h62v19h-62zM644 519h20v7h-20zM641 516v3h28v-3M676 516v19M680 516v19"/>
        <path class="r" d="M623 526h24M654 526v9M665 519v16M656 526v9"/>
        <use href="#core" x="18" y="168"/><use href="#side" x="10" y="168"/>
        <path fill="url(#hw)" d="M579 556h18v48h-18zM579 610h18v8h-18z"/><path class="w" d="M579 556h18v72h-18zM579 560h10v7h8M583 567v6h-4M579 604h18M579 610h18M579 617h11v10h-11"/><path class="r" d="M579 562h18M579 580h7M590 592h7M579 621h18M590 614h7"/>
        <path class="pk" d="M641 560v-8M662 560v-8M613 591h44v-10h32M660 604v31"/>
        <path class="m" d="M623 556v-10h62v10M623 556h-13v72h13M623 516h-2v14h27v-5M685 516h4v19h-4M655 516v-3M669 516v-3M677 514h9M620 536h6M652 536h6M665 538h8M618 561h38M618 564h32M618 572h28M618 576h28M618 580h28M618 585h30M618 587h36M618 592h24M618 596h30M618 600h24M618 604h36M618 606h36M618 610h22M618 614h22M618 622h20M641 553v55M646 553v55M648 560v60M654 553v75M636 556l10 10M644 600v34M646 605v29M648 605v29M650 610v24M652 612v22M630 595v40M625 592v43M634 606v24M678 572l-8-8M678 580v40M672 587h18M672 596h10M668 610l8 6"/>
        <path class="m" d="M577 562v-6h-4M597 553v14h4M575 575h4v8h-6v-5M597 587h8v8h-8M575 618h4M575 611v14M579 628v4h12v-4M600 617v8M570 567h6M695 574h8v12h-6M695 580h6M720 553v10h8v6h-6M715 554v6M711 628v4h10v-8M712 606v12M705 612h8"/>
        <path class="c" stroke-width="2" d="M617 560v30M620 560v30M616 592v24M619 592v26M617 620v6"/>
        <path class="c" d="M622 520h3M646 514h8M655 514h3M670 511h7M681 513h6M687 525h4M635 532h5M647 537h6M668 538h5M647 546h4M629 552h6M654 552h3M610 592h2M591 553h5M599 563h4M569 567h6M571 580h5M600 588h5M574 612h3M574 624h3M582 632h5M601 618v8M673 568h5M678 580v4M680 588h6M680 598h5M642 634h12M622 635h4M628 637h3M660 636h4M694 571h4M694 586h6M702 577h4M718 551h4M726 551h4M723 564v4M713 609h5M714 630h4M713 620h4"/>
        <path class="y" d="M651 541h8M583 635h8M708 637h8M712 651h8"/>

        <!-- plate 1 -->
        <path fill="url(#h)" d="M1113 286h27v7h-27zM1153 286h11v7h-11zM1168 286h6v7h-6zM1183 286h3v7h-3z"/><path class="w" d="M1113 286h73v7h-73zM1143 287l4 6h4l4-6zM1164 286v7M1167 286v7M1175 286v7M1182 286v7M1206 314h7v62h-7z"/>
        <path class="gr" d="M1209 316v12M1209 364v12M1211 340l-3 6 3 5" stroke-dasharray="1 2"/>
        <use href="#plate1"/><path class="r" d="M1137 286v59M1141 315v61M1158 315v61M1164 286v84M1165 286v84M1178 286v84"/><path d="M1181 316h4v3h-2v2h-2z" fill="#00f"/>
        <path class="y" d="M1142 294h8M1148 387h9"/>
        <path fill="url(#h)" d="M977 518h72v8h-72z"/><path fill="#212830" d="M1036 519h9v6h-9zM1009 519h8v6h-8z"/><path class="w" d="M977 518h72v8h-72zM1036 518v8M1045 518v8"/><use href="#plate1" x="-136" y="235"/>
        <path class="r" d="M1013 544v70M1000 518v8M1013 518v8M1028 516v10"/>
        <path class="m" d="M985 545v11M970 556h15M1042 545v11M1001 545v35M999 545v8M985 603v10M971 604h14M1042 604v10M1028 604l6-6M1042 604h14M967 580h10M1048 580h7M994 574l8 6M1013 545v10M1013 604v10M1008 514h10v6M1008 514v6M1038 515h9v6M1038 515v5M1049 519h4v8h-4M998 514v8M1027 514v6M1009 528h9M1013 526v3"/>
        <path class="c" d="M990 517h7M1009 512h9M1026 516h5M1040 514h5M1052 523h2M1010 529h6M983 544h4M998 544h4M1012 544h3M1040 544h4M969 556h3M991 574h4M966 580h3M1053 580h3M970 604h3M1031 599h5M1056 604h2M984 616h3M1012 616h3M1040 617h4"/>
        <path class="y" d="M1010 538h8M1039 638h8"/>

        <!-- plate 2 -->
        <path fill="url(#h)" d="M1293 301h8v5h-8zM1308 301h8v5h-8zM1324 301h6v5h-6zM1350 326h5v72h-5z"/><path class="w" d="M1293 301h38v5h-38zM1350 326h5v72h-5z"/><use href="#plate2"/>
        <path class="r" d="M1303 301v5M1321 301v56M1328 301v29M1350 332h5M1350 350h5M1350 366h5M1350 369h5M1350 380h5M1350 382h5"/><path class="y" d="M1306 307h6M1306 412h7M1349 404h7"/>
        <path fill="url(#h)" d="M1079 521h10v5h-10zM1099 521h6v5h-6z"/><path fill="url(#hw)" d="M1130 538h5v72h-5z"/><path class="w" d="M1079 521h38v5h-38zM1130 538h5v72h-5z"/><use href="#plate2" x="-214" y="212"/>
        <path class="r" d="M1090 519v7M1107 519v7M1113 518v8M1130 544h5M1130 563h5M1130 578h5M1130 592h5"/>
        <path class="m" d="M1074 562h28M1074 566h22M1074 569h12M1074 574h16M1074 580h34M1074 583h22M1074 585h20M1074 590h22M1074 594h34M1082 580v34M1088 585v29M1094 590v24M1098 568v46M1090 548v6M1098 536v6M1084 519h8v8M1104 518h10v6M1116 520h6v8M1112 565l6-8M1128 544h10M1127 562h12M1127 564h12M1133 536v10M1128 577h10v6h-10M1130 568v3M1104 544h10M1080 602v12"/>
        <path class="c" d="M1081 519h6M1088 516h6M1105 517h6M1115 517h6M1096 527h4M1089 546h6M1105 546h5M1112 564h6M1074 562v36M1076 574v4M1080 615h16M1098 535h2M1129 542h4M1137 544h2M1128 562h4M1137 562h3M1128 577h3M1136 583h3M1132 572h4"/>
        <path class="y" d="M1092 532h8M1133 614h8M1124 628h7"/>

        <!-- plate 3 -->
        <path fill="url(#h)" d="M1421 358h32v6h-32zM1463 358h6v6h-6zM1475 358h15v6h-15z"/><path class="w" d="M1417 358h73v6h-73z"/><use href="#plate3"/><path class="r" d="M1420 357v8M1458 358v32M1473 357v8"/><circle cx="1420" cy="415" r="2" class="bu"/><path class="y" d="M1453 372h6M1452 426h9"/>
        <path fill="url(#h)" d="M1172 551h32v6h-32zM1214 551h6v6h-6zM1226 551h14v6h-14z"/><path class="w" d="M1168 551h72v6h-72z"/><use href="#plate3" x="-249" y="187"/><path class="r" d="M1170 550v8M1209 550v8M1223 550v8"/>
        <path class="m" d="M1167 550h7M1170 549v10M1205 551v-3h10v3M1219 549h8v9M1240 552h4v5h-4M1166 594h18M1166 602h8M1184 594v14M1193 594v14M1204 565v10M1204 602v6M1236 586h5"/><path class="c" d="M1168 560h4M1207 547h5M1221 548h5M1218 560h5M1242 555h2M1203 565h2M1164 594h3M1164 603h3M1183 610h3M1192 610h3M1203 610h3M1241 586h3"/><path class="y" d="M1205 564h8M1232 618h9"/>

        <!-- plate 4 -->
        <use href="#sec4"/><use href="#plate4"/><path class="r" d="M1602 363v16M1608 363v44M1609 363v44M1630 363v46M1631 363v46M1646 363v44M1652 363v44M1659 363v44M1660 363v44"/><path class="y" d="M1627 387h6M1627 424h8"/>
        <use href="#sec4" x="-322" y="192"/><use href="#plate4" x="-322" y="186"/><path class="r" d="M1280 554v19M1287 554v18M1309 554v18M1325 555v17M1334 555v17M1338 555v17M1309 585v12"/>
        <path class="m" d="M1271 551v6M1278 553h6v4M1322 551h6v5M1345 555h4v16h-4M1275 573h10M1309 550v6M1262 585h10v12h-10zM1273 592v12h72v-12M1280 592v10h58v-10M1287 592v7h43v-7M1309 592v6h15v-6M1274 583l6 8M1283 583l4 8"/>
        <path class="c" d="M1271 553h2M1280 552h4M1306 551h5M1323 551h5M1348 564h2M1280 574h4M1268 582h4M1279 582h6M1261 592h2M1264 595h5M1316 601h3M1293 607h4M1298 603h4M1315 599h4M1306 609h4"/><path class="y" d="M1306 577h7M1335 620h8"/>

        <!-- plate 5 -->
        <use href="#sec5"/><use href="#plate5"/><use href="#side5"/><circle cx="1751" cy="453" r="2" fill="#00f"/><path class="y" d="M1780 366h8M1797 473h8M1855 456h8"/>
        <path fill="url(#h)" d="M1381 513h72v10h-72z"/><path fill="#212830" d="M1407 514h21v9h-21z"/><path class="w" d="M1381 513h72v10h-72zM1408 514v5h18v-5M1405 513v10M1429 513v10"/><path class="r" d="M1403 511v14M1417 513v10M1429 513v10M1445 511v14"/>
        <use href="#plate5" x="-367" y="163"/><path fill="url(#hw)" d="M1469 546h10v26h-10zM1469 591h10v26h-10z"/><path class="w" d="M1469 546h10v72h-10zM1469 572h10v18h-10M1473 572v18"/><path class="r" d="M1469 574h4M1469 589h4M1469 606h10M1381 582h70M1417 548v69"/>
        <path class="m" d="M1401 510h6M1404 509v17M1401 526h6M1397 513h6v6M1441 512h8M1445 510v14M1441 526h8M1453 514h4v9h-4M1388 543v15M1372 557h16M1374 558h28v59M1375 582h14M1374 590h38M1374 606h14M1388 606v12M1404 570v48M1409 574v44M1417 606v12M1417 540v20M1446 543v15M1446 558h12M1446 606h12M1446 606v12M1446 596v10M1432 606l6 6M1417 574l8-6M1452 582h8M1471 560h6v12M1463 577h10M1463 577v13h6M1479 570h8v25h-8M1483 574v18M1465 606h18M1465 603v6M1483 603v6"/>
        <path class="c" d="M1397 510h5M1394 527h6M1442 511h6M1456 518h2M1387 542h3M1416 538h2M1445 542h3M1372 557h5M1373 582h3M1373 590h3M1374 606h3M1457 558h3M1457 582h3M1457 606h3M1407 568h4M1425 568h4M1448 596h5M1438 612h5M1387 623h3M1401 623h8M1416 623h3M1445 624h3M1479 564h3M1480 574v4M1463 582h2M1486 582v4M1464 605h2M1482 606h2"/>
        <path class="y" d="M1415 531h8M1461 625h8M1461 658h8"/>

        <!-- ejector plate sheet -->
        <path fill="url(#h)" d="M1529 537h72v5h-72z"/><path fill="#212830" d="M1560 538h10v4h-10zM1586 538h6v4h-6z"/><path class="w" d="M1529 537h72v5h-72zM1529 556h72v71h-72z"/>
        <circle class="w15" cx="1564" cy="591" r="5"/><use href="#ring" x="1540" y="569"/><use href="#ring" x="1556" y="572"/><use href="#ring" x="1573" y="572"/><use href="#ring" x="1589" y="569"/><use href="#dot" x="1555" y="581"/><use href="#dot" x="1574" y="581"/><use href="#ring" x="1540" y="591"/><use href="#ring" x="1589" y="591"/><use href="#dot" x="1555" y="597"/><use href="#dot" x="1574" y="597"/><use href="#ring" x="1540" y="613"/><use href="#ring" x="1556" y="611"/><use href="#ring" x="1573" y="611"/><use href="#ring" x="1589" y="613"/>
        <path class="r" d="M1529 591h72M1564 556v71M1556 535v8M1564 534v10M1573 535v8M1589 535v8"/><path class="pk" d="M1524 577v-5h36v19M1570 591v-10h13v-11h23v6"/>
        <path class="m" d="M1529 556h-10v71h10M1529 627v9h72v-9M1524 581h31M1524 597h31M1524 610h32M1524 613h16M1540 591v40M1555 581v50M1557 611v20M1564 551v10M1564 620v10M1550 566l5 6M1573 581l8-5M1589 569l5-6M1600 591h6M1560 535v-4h9v6M1550 535h8M1572 535h6v4M1586 534h8v8M1600 538h4v4M1554 543h6M1586 543h6"/>
        <path class="c" d="M1548 537h4M1561 531h8M1572 534h4M1586 534h5M1602 539h3M1553 544h4M1571 544h4M1588 544h4M1549 566h5M1592 563h5M1576 578h6M1523 581h3M1519 589v8M1523 592h4M1523 597h3M1523 609h3M1523 613h3M1538 632h4M1554 632h6M1563 632h3M1605 591h2M1559 637h4M1563 551h3"/>
        <path class="y" d="M1560 550h8"/>

        <!-- crosshair cursor -->
        <path d="M10.500 651v45M10.500 703v45M14 699.500h45M7.500 696.500h6v6h-6z" stroke="#e8e8e8" fill="none"/>
      </g>
    </svg>

    <div class="vplabel"><button>[−]</button><button>[Top]</button><button>[2D Wireframe]</button></div>
    <div class="winbtns">
      <button aria-label="Minimize"><svg width="12" height="12"><path d="M1 8h10v3H1z" fill="#eee"/></svg></button>
      <button aria-label="Restore"><svg width="12" height="12"><path d="M2 4h6v6H2z" fill="none" stroke="#eee" stroke-width="2"/><path d="M3.500 1.500h7v7" fill="none" stroke="#eee"/></svg></button>
      <button aria-label="Close"><svg width="12" height="12"><path d="M2 2l8 8M10 2l-8 8" stroke="#eee" stroke-width="2.500"/></svg></button>
    </div>
    <div class="cube">
      <i class="ring"></i><b class="north">N</b><b class="west">W</b><b class="east">E</b><b class="south">S</b>
      <button class="face"><span>TOP</span></button>
    </div>
    <button class="wcs">WCS<svg width="9" height="7"><path d="M.5.500h8l-4 6z" fill="none" stroke="#c5c8d2"/></svg></button>
    <div class="navbar">
      <svg width="32" height="212" fill="none" stroke="#43484d"><circle cx="26" cy="5" r="3.500"/><path d="M24 3l4 4M28 3l-4 4"/><circle cx="16" cy="30" r="10.500"/><path d="M17 19h10v11"/><circle cx="16" cy="30" r="6"/><path d="M9 37l3-3M23 37l-3-3"/><path d="M13 50h6l-3 3z" fill="#33383c" stroke="none"/><path d="M4 57h24M4 165h24" stroke="#686d71"/><path d="M9 82C5 75 3 73 5 72s4 2 5 3c-1-5-3-9-1-10s3 5 4 8c0-5-1-11 1-11s2 6 3 11c1-4 1-9 3-9s1 6 1 10c1-3 2-6 4-5s-1 7-2 13c0 2-2 3-7 3-4 0-5-1-7-3z" fill="#51575d"/><path d="M6 91l16 16M22 91L6 107M5 95v-5h5M18 90h5v5M5 102v5h5"/><circle cx="20" cy="105" r="5"/><path d="M24 109l4 5" stroke-width="2"/><path d="M13 121h6l-3 3z" fill="#33383c" stroke="none"/><path d="M14 149v-14h-3l5-6 5 6h-3v14z" fill="#51575d"/><path d="M13 136c-9 1-12 6-4 8M19 136c12 2 9 9-3 9H8M11 142l-4 3 4 3"/><path d="M13 158h6l-3 3z" fill="#33383c" stroke="none"/><path d="M5 170h5v6H5zM13 170h5v6h-5zM21 170h5v6h-5zM5 179h15v13H5z"/><path d="M9 181l7 4-7 5z" fill="#43484d"/><circle cx="26" cy="206" r="3.500"/><path d="M24 206h4"/></svg>
    </div>
    <div class="cmd">
      <div class="grip"><svg width="48" height="22"><path d="M1.500 2v18M4.500 2v18" stroke="#b8bcc2" stroke-width="2" stroke-dasharray="2 1"/><path d="M12 7l7 8M19 7l-7 8" stroke="#c8c8c8" stroke-width="2"/><path d="M33 18l8-8" stroke="#c8c8c8" stroke-width="3"/><path d="M41 5a4 4 0 1 0 5 4" stroke="#c8c8c8" stroke-width="2.500" fill="none"/></svg></div>
      <label class="line"><svg width="26" height="14"><path d="M.5.500h14v12H.5zM0 3h15" fill="none" stroke="#444" stroke-width="1.500"/><path d="M3 6l2 2-2 2M6 10h4" stroke="#444" fill="none"/><path d="M18 5h7l-3.500 4z" fill="#444"/></svg><input type="text" placeholder="Type a command" aria-label="Command line"><i class="arr up"></i></label>
    </div>
  </main>

  <footer class="status">
    <div class="ltabs"><button class="on">Model</button><button>Layout1</button><button aria-label="New layout"><svg width="9" height="9"><path d="M4.500 0v9M0 4.500h9" stroke="#b4b8be" stroke-width="2"/></svg></button></div>
    <div class="tools">
      <div class="grp"><button class="txt">MODEL</button></div>
      <div class="grp"><button><svg class="i16"><path class="l" d="M4.500 0v16M8.500 0v16M12.500 0v16M0 3.500h16M0 7.500h16M0 11.500h16"/></svg></button><button><svg class="i16"><path class="l2" stroke-dasharray="2 3" d="M2 3h12M2 8h12M2 13h12"/></svg></button><i class="arr lg"></i></div>
      <div class="grp"><button><svg class="i16"><path class="l" d="M1.500 0v14.500H16M1.500 8.500h5v6"/></svg></button><button class="on"><svg class="i16"><circle class="l" cx="7" cy="9" r="6"/><path class="l" d="M13 0L7 9.500h9M10 5c3 1 3 3 3 7"/></svg></button><i class="arr lg"></i><button><svg class="i16"><path d="M1 1l14 14" stroke="#e0595c"/><path d="M8.500 0v16" stroke="#57b06c"/></svg></button><i class="arr lg"></i></div>
      <div class="grp"><button class="on"><svg class="i16"><path class="l" d="M15 1L1 14.500h15"/><path class="g" d="M7 6h3v3H7z"/></svg></button><button class="on"><svg class="i16"><path class="l" d="M1 1.500h4v4H1zM7 3.500h7.500v11h-12V7"/></svg></button><i class="arr lg"></i></div>
      <div class="grp"><button class="on"><svg class="i16"><use href="#annot"/><circle class="l" cx="13" cy="3" r="2"/></svg></button><button><svg class="i16"><use href="#annot"/><path class="l" d="M14 0l-3 4h3l-2 3"/></svg></button><button><svg class="i16"><defs><g id="annot"><path class="g" d="M8 0l3 8 4 7-6-3v4H7v-4l-6 3 4-7z"/></g></defs><use href="#annot"/></svg></button><button class="scale">1:1<i class="arr lg"></i></button></div>
      <div class="grp"><button><svg class="i16"><circle cx="8" cy="8" r="4.500" fill="none" stroke="#ddd" stroke-width="3.500"/><circle cx="8" cy="8" r="7" fill="none" stroke="#ddd" stroke-width="2" stroke-dasharray="2.800 2.700"/></svg></button><i class="arr lg"></i></div>
      <div class="grp"><button><svg class="i16"><path class="l2" d="M8 0v16M0 8h16"/></svg></button></div>
      <div class="grp"><button><svg class="i16"><path class="l" d="M1 1.500h5v4H1zM7 10l3 5.500H4z"/><circle class="l" cx="13" cy="8" r="2.500"/></svg></button></div>
      <div class="grp"><button><svg class="i16"><path d="M1 0h8l5 5v8H1z" fill="#3f8ed0"/><path d="M1 5h8M5 1v10" stroke="#fff"/><path d="M3 9h7v4H3z" fill="#ffcf60"/><path d="M7 12l3 3 6-6" stroke="#5cba4a" stroke-width="2.500" fill="none"/></svg></button></div>
      <div class="grp"><button><svg class="i16"><path class="l" d="M.5 2.500h15v11H.5zM10 5h3v3M6 11H3V8"/></svg></button><button><svg class="i16"><path class="l2" d="M0 2h16M0 8h16M0 14h16"/></svg></button></div>
    </div>
  </footer>
</div>

<footer class="taskbar">
  <button class="start" aria-label="Start"><svg width="16" height="16"><path d="M0 2l7-1v6H0zM8 1l8-1v7H8zM0 8h7v7l-7-1zM8 8h8v8l-8-1z" fill="#fff"/></svg></button>
  <label class="search"><svg width="18" height="18"><circle cx="11" cy="6.500" r="5.500" fill="none" stroke="#222" stroke-width="1.300"/><path d="M7 10.500L1 17" stroke="#222" stroke-width="1.300"/></svg><input type="text" placeholder="Search" aria-label="Search"><svg width="48" height="26"><path d="M12 12l10 12M16 10l5 14M8 22c4-4 8-2 14 2" stroke="#3f9142" stroke-width="2" fill="none"/><circle cx="6" cy="12" r="5.500" fill="#e2492f"/><circle cx="13" cy="6" r="5.500" fill="#ef6a3c"/><circle cx="12" cy="15" r="5" fill="#d13b25"/><path d="M2 11l8 3M10 4l6 4" stroke="#ffb28a"/><path d="M25 9h19v16H25z" fill="#f0807c"/><path d="M23 6h22v5H23z" fill="#f5a5a0"/><path d="M33 5h4v20h-4z" fill="#b3202c"/><path d="M34 5c-6-7-9-2-1 1M36 5c6-7 9-2 1 1" stroke="#c22a34" stroke-width="2" fill="none"/></svg></label>
  <button class="app-i"><svg width="18" height="18"><path d="M1 4V2h11v2M2 6h9v7H2zM1 15v2h11v-2M15.500 1v16" stroke="#fff" fill="none"/><path d="M14 6h3v3h-3z" fill="#fff"/></svg></button>
  <button class="app-i"><svg width="18" height="18"><path d="M5 1h6l-3 11c-1 3-7 2-7-1z" fill="#3aa0e8"/><path d="M13 17H7l3-11c1-3 7-2 7 1z" fill="#e85aa0"/><path d="M2 5c1-3 3-4 5-4L5 9c0 2-3 2-4 0z" fill="#48c78e"/><path d="M11 1c3 0 3 3 4 4l-4 2z" fill="#8a5be8"/><path d="M4 14c3 0 5-2 6-5l-1 6c-1 2-4 2-5-1z" fill="#f5b13c"/></svg></button>
  <button class="app-i"><svg width="18" height="18"><circle cx="9" cy="9" r="8" fill="#1477c9"/><path d="M2 7C5-1 17 0 17 8c0 4-5 4-6 3 3-7-5-7-9-4z" fill="#4fd08a"/><path d="M7 9c-1 6 5 7 9 5-4 4-11 3-13-2-1-4 3-6 6-5z" fill="#2eb6ef"/></svg></button>
  <button class="app-i"><svg width="18" height="18"><path d="M6 4V1h6v3" stroke="#35b4f2" fill="none" stroke-width="1.500"/><path d="M1 3h16v14H1z" fill="#fff"/><path d="M5 6h4v4H5z" fill="#f25022"/><path d="M10 6h4v4h-4z" fill="#7fba00"/><path d="M5 11h4v4H5z" fill="#00a4ef"/><path d="M10 11h4v4h-4z" fill="#ffb900"/></svg></button>
  <button class="app-i"><svg width="18" height="18"><path d="M2 7l8-6 7 6v10H4z" fill="#1f86dd"/><path d="M4 5h11v7H4z" fill="#bfe6ff"/><path d="M5 17l12-9v9z" fill="#39a9ee"/><path d="M1 8h9v8H1z" fill="#0b57ad"/><circle cx="5.500" cy="12" r="2" fill="none" stroke="#fff" stroke-width="1.500"/></svg></button>
  <button class="app-i"><svg width="18" height="18"><path d="M2 9l8-5 6 3-8 6z" fill="#6e6e70"/><path d="M2 9l6 4v2l-6-4zM8 13l8-6v2l-8 6z" fill="#3c3c3f"/></svg></button>
  <button class="app-i run"><svg width="18" height="18"><path d="M1 2h6l2 2h8v12H1z" fill="#e8a92c"/><path d="M1 6h16v10H1z" fill="#ffd868"/><path d="M4 16v-5h10v5h-2v-2H6v2z" fill="#3b8fd9"/></svg></button>
  <button class="app-i run"><svg width="18" height="18"><circle cx="9" cy="10" r="7.500" fill="#ff8a2a"/><path d="M12 1c5 3 6 9 4 12s-6 5-10 3c6 0 8-4 6-8-1-2-1-5 0-7z" fill="#ffcf3a"/><path d="M2 6c1-3 3-3 4-3 2 2 4 3 4 5z" fill="#ff4f4a"/><circle cx="9" cy="10" r="3.500" fill="#8456e0"/></svg></button>
  <button class="app-i run"><svg width="18" height="18"><circle cx="9" cy="9" r="8" fill="#fbc116"/><path d="M9 9L2 5a8 8 0 0 1 14 0z" fill="#e8453c"/><path d="M9 9L2 5a8 8 0 0 0 6 12z" fill="#32a350"/><circle cx="9" cy="9" r="4" fill="#fff"/><circle cx="9" cy="9" r="3" fill="#3b7ded"/></svg></button>
  <button class="app-i zalo"><svg width="18" height="18"><rect x="1" y="1" width="16" height="16" rx="6" fill="#fff"/><path d="M2 13c2 4 12 4 14 0-3 2-11 2-14 0z" fill="#3e8cf5"/></svg><span>Zalo</span></button>
  <button class="app-i run"><svg width="18" height="18"><path d="M1 1h15v16H1z" fill="#e9eef2"/><path d="M4.500 4.500h8v9h-8z" fill="#fff" stroke="#2b2f36" stroke-width="1.500"/><path d="M8 5h5v5H8z" fill="#219be0"/></svg></button>
  <button class="app-i run cur"><svg width="18" height="18"><path d="M1 1h16v16H1z" fill="#fbe9e8"/><path d="M7 3h4l4 12h-3l-1-3H7l-1 3H3zM8 10h3L9 5z" fill="#c1272d"/></svg></button>
  <div class="tray">
    <svg width="128" height="20" fill="none" stroke="#fff" stroke-width="1.200"><path d="M3 13l6-6 6 6"/><path d="M30 3q4-3 8 0M30 17q4 3 8 0M30.500 6h7v8h-7zM37 9l3-2v6l-3-2"/><path d="M54 4h13v9H54zM60 13v4M56 17h9M50 2h4v4h-4zM52 6v3"/><path d="M74 8h3l4-4v12l-4-4h-3zM83 7q2 3 0 6M86 5q3 5 0 10"/><path d="M88 3q4 7 0 14" stroke="#777"/><path d="M104 15q-2-3 2-4l3 3M106 16q6 1 8-8l3-5q3-2 2 2l-6 9M114 12q4-3 4 1"/></svg>
    <span>ENG</span><span class="clock">11:47 SA</span>
    <button aria-label="Notifications"><svg width="16" height="16"><path d="M0 0h16v12h-5v4l-4-4H0z" fill="#fff"/><path d="M3 3.500h10M3 6.500h10M3 9h6" stroke="#333"/></svg></button>
  </div>
</footer>
</body>
</html>
```
FILE: styles.css
```css
* { box-sizing: border-box; }
body {
  margin: 0;
  height: 100vh;
  display: flex;
  flex-direction: column;
  overflow: hidden;
  background: linear-gradient(#ddd 5px, #6cc644 5px, #6cc644 32px, #fff 32px);
  font: 11px/15px "Open Sans", "Noto Sans", sans-serif;
  color: #f0f1f3;
}
button {
  margin: 0;
  padding: 0;
  border: 0;
  background: none;
  color: inherit;
  font: inherit;
  white-space: nowrap;
}
svg { flex: none; display: block; }
.i16 { width: 16px; height: 16px; overflow: visible; }
.i32 { width: 32px; height: 32px; overflow: visible; }
.l { fill: none; stroke: #dcdcdc; }
.l2 { fill: none; stroke: #dcdcdc; stroke-width: 2; }
.bl { stroke: #6fbdf8; }
.bl:not([fill]) { fill: none; }
.b { fill: #6fbdf8; }
.g { fill: #dadada; }
.arr {
  flex: none;
  width: 0;
  height: 0;
  border: 3px solid transparent;
  border-top-color: #dcdcdc;
  border-bottom: 0;
}
.arr.lg { border-width: 4px 4px 0; }
.arr.up { border: 4px solid transparent; border-top: 0; border-bottom-color: #444; }

.app {
  flex: 1;
  min-height: 0;
  margin: 0 2px;
  border: 1px solid #0c93dc;
  border-top: 0;
  background: #222933;
  display: flex;
  flex-direction: column;
}

/* title strip and ribbon tabs */
.titlebar { height: 10px; flex: none; display: flex; position: relative; padding-left: 77px; }
.logo { position: absolute; left: 11px; top: 0; width: 26px; height: 18px; }
.help-search { width: 178px; height: 4px; margin-left: auto; background: #454e60; }
.titlebar .qat:last-child { width: 389px; }
.tabs { height: 18px; flex: none; display: flex; gap: 1px; padding-left: 49px; color: #b9bdc4; }
.tab { padding: 0 10px 2px; line-height: 16px; }
.tab.on { background: #3b4453; color: #fff; }
.minribbon { margin-left: 20px; display: flex; align-items: center; gap: 4px; }

/* ribbon */
.ribbon { height: 97px; flex: none; display: flex; gap: 1px; margin: 0 4px 0 5px; }
.panel { position: relative; background: #3b4453; display: flex; flex-direction: column; flex: none; }
.p-draw { width: 223px; }
.p-modify { width: 249px; }
.p-annot { width: 188px; }
.p-layers { width: 272px; }
.p-block { width: 160px; }
.p-props { width: 264px; }
.p-groups { width: 68px; }
.p-util { width: 96px; }
.p-clip { width: 79px; }
.p-view { flex: 1; }
.body { flex: 1; display: flex; padding: 3px 0 0 1px; align-items: flex-start; }
.ptitle { height: 19px; display: flex; align-items: center; justify-content: center; gap: 7px; }
.ptitle.lead { justify-content: flex-start; padding-left: 5px; gap: 9px; }
.ptitle button { display: flex; align-items: center; gap: 7px; }
.launch { position: absolute; right: 4px; bottom: 6px; }
.big { display: flex; flex-direction: column; align-items: center; padding-top: 2px; text-align: center; flex: none; }
.big span { margin-top: 5px; }
.big .arr { margin-top: 3px; }
.base { padding-top: 7px; }
.w38 { width: 38px; }
.w40 { width: 40px; }
.w42 { width: 42px; }
.w46 { width: 46px; }
.w52 { width: 52px; }
.w54 { width: 54px; }
.w60 { width: 60px; }
.w62 { width: 62px; }
.w69 { width: 69px; }
.w72 { width: 72px; }
.w76 { width: 76px; }
.col { display: grid; grid-auto-rows: 24px; flex: none; }
.c-draw { padding-left: 6px; }
.c-draw .sm { gap: 7px; }
.p-modify .body { padding-left: 7px; }
.p-annot .big + .col { padding-left: 6px; }
.p-block .col { padding-left: 2px; }
.p-clip .col { padding-left: 4px; }
.p-util .col { padding-left: 1px; }
.sm { display: flex; align-items: center; gap: 5px; text-align: left; }
.sm .arr { margin-left: 4px; }
.c-draw .sm .arr { margin-left: 0; }
.sm .arr.push { margin-left: auto; margin-right: 14px; }
.ic { width: 24px; height: 24px; display: grid; place-items: center; }
.ic.on { height: 22px; align-self: center; border: 1px solid #6fbdf8; background: #455a73; }
.stack { flex: 1; padding: 0 2px 0 1px; }
.row { display: flex; height: 24px; }
.row .sm { margin-left: 4px; }
.combo {
  height: 22px;
  display: flex;
  align-items: center;
  padding: 0 2px 0 5px;
  border: 1px solid #262d38;
  background: #4d586b;
}
.stack .combo { margin-top: 2px; }
.combo select {
  flex: 1;
  min-width: 0;
  appearance: none;
  border: 0;
  padding: 0 0 0 2px;
  background: none;
  color: inherit;
  font: inherit;
}
.tight { width: 16px; place-items: center; }
.combos { flex: 1; margin: 0 1px 0 2px; align-items: center; }
.combos .combo { width: 100%; }
.swatch { width: 16px; height: 16px; margin: 0 8px 0 7px; background: #f0f; border: 1px solid #bbb; }
.rule { width: 64px; height: 1px; margin-left: -2px; background: #fff; }

/* document tabs */
.files { height: 27px; flex: none; display: flex; align-items: flex-end; padding-left: 25px; }
.ftab {
  position: relative;
  height: 22px;
  width: 122px;
  padding: 0 10px;
  border-radius: 10px 10px 0 0;
  background: #2f3745;
  color: #b9bdc4;
  display: flex;
  align-items: center;
  gap: 11px;
}
.ftab::before, .ftab.on::after { content: ""; position: absolute; bottom: 0; width: 10px; height: 10px; }
.ftab::before { left: -10px; background: radial-gradient(circle at 0 0, transparent 10px, #2f3745 10px); }
.ftab.on { width: 158px; padding-left: 11px; background: #3b4453; color: #f0f1f3; }
.ftab.on::before { background: radial-gradient(circle at 0 0, transparent 10px, #3b4453 10px); }
.ftab.on::after { right: -10px; background: radial-gradient(circle at 10px 0, transparent 10px, #3b4453 10px); }
.fadd { width: 22px; height: 15px; margin: 0 0 4px 8px; border-radius: 3px 9px 4px 9px; background: #2f3745; display: grid; place-items: center; }

/* drawing area */
.canvas {
  position: relative;
  flex: 1;
  min-height: 0;
  margin: 0 3px;
  border: solid #3b4453;
  border-width: 5px 4px 1px 1px;
  background: #212830;
  overflow: hidden;
}
.drawing { width: 100%; height: 100%; position: absolute; left: 0; top: 0; }
.f { fill: none; stroke: #00d000; stroke-width: 1.5; }
.w { fill: none; stroke: #e4e4e4; stroke-width: 1.3; }
.w15 { fill: none; stroke: #e8e8e8; stroke-width: 1.7; }
.w2 { fill: none; stroke: #e8e8e8; stroke-width: 2; }
.gr { fill: none; stroke: #b4b4b4; stroke-width: 1.2; }
.r { fill: none; stroke: #f00000; stroke-width: 1.2; }
.p { fill: #c00; stroke: #f0d0d0; stroke-width: 1.3; }
.pk { fill: none; stroke: #d87070; stroke-width: 1.2; }
.m { fill: none; stroke: #f800f8; stroke-width: 1.3; }
.c { fill: none; stroke: #00f0f0; stroke-width: 2.5; stroke-dasharray: 3 1; }
.c1 { fill: none; stroke: #00e0e0; stroke-width: 1.5; }
.y { fill: none; stroke: #ff0; stroke-width: 2; }
.bu { fill: none; stroke: #33f; stroke-width: 2; }
.dense .m { stroke-width: 1.6; }
.dense .w { stroke-width: 1.6; }

.vplabel { position: absolute; left: 3px; top: 6px; display: flex; gap: 2px; }
.winbtns { position: absolute; right: 10px; top: 9px; display: flex; gap: 8px; }
.cube { position: absolute; right: 17px; top: 40px; width: 132px; height: 132px; font-size: 21px; color: #a9abad; }
.cube .ring { position: absolute; inset: 6px; border: 13px solid #43494f; border-radius: 50%; }
.cube b { position: absolute; font-family: "Liberation Sans", sans-serif; line-height: 20px; width: 20px; text-align: center; }
.cube .north { left: 56px; top: 0; }
.cube .south { left: 56px; bottom: 0; }
.cube .west { left: 0; top: 56px; }
.cube .east { right: 0; top: 56px; }
.cube .face { position: absolute; inset: 40px; border: 1px solid #8c8f91; background: #afb0b1; display: grid; place-items: center; }
.cube .face span { width: 32px; height: 32px; background: #9ea4a9; color: #4a525a; font: bold 11px/32px "Open Sans", sans-serif; }
.wcs {
  position: absolute;
  right: 59px;
  top: 194px;
  width: 48px;
  height: 17px;
  border-radius: 4px;
  background: #9a9cabd0;
  border: 1px solid #b0b2be80;
  color: #3c4048;
  display: flex;
  align-items: center;
  justify-content: space-between;
  padding: 0 4px;
}
.navbar { position: absolute; right: 4px; top: 236px; width: 32px; height: 212px; background: #5b5f62; border-radius: 4px; box-shadow: 0 0 3px #111; }

.cmd { position: absolute; left: 20%; right: 20%; bottom: 0; height: 25px; display: flex; }
.grip { width: 56px; padding: 2px 4px; background: #2b303c; }
.line { flex: 1; display: flex; align-items: center; padding: 0 3px; background: #bcbdbe; border-radius: 2px; }
.line input {
  flex: 1;
  min-width: 0;
  border: 0;
  padding: 0 0 0 7px;
  background: none;
  outline: 0;
  font: italic 12px "Liberation Mono", monospace;
}
.line input::placeholder { color: #555; opacity: 1; }

/* layout tabs and status bar */
.status { height: 32px; flex: none; display: flex; justify-content: space-between; padding: 0 5px 0 15px; }
.ltabs { display: flex; height: 18px; color: #b9bdc4; }
.ltabs button { background: #2f3745; padding: 0 12px 2px; border-radius: 0 0 9px 9px; }
.ltabs .on { background: #3b4453; color: #fff; font-weight: bold; }
.tools { display: flex; gap: 2px; padding-top: 2px; }
.grp { height: 24px; display: flex; align-items: center; background: #3b4453; }
.grp button { width: 24px; height: 24px; display: grid; place-items: center; }
.grp button.on { background: #6390c4; }
.grp .txt { width: 48px; font-size: 12px; }
.grp > .arr { margin: 0 4px; }
.grp .scale { width: 34px; display: flex; align-items: center; gap: 5px; padding-left: 3px; }

/* taskbar */
.taskbar { height: 30px; flex: none; display: flex; background: #2a2b22; }
.start { width: 36px; display: grid; place-items: center; }
.search { width: 259px; display: flex; align-items: center; padding: 0 7px 0 12px; background: #f2f2f2; }
.search input { flex: 1; min-width: 0; border: 0; padding: 0 0 0 10px; background: none; outline: 0; font: 14px "Open Sans", sans-serif; }
.search input::placeholder { color: #333; opacity: 1; }
.app-i { width: 37px; display: grid; place-items: center; position: relative; }
.run { box-shadow: inset 0 -2px #76b9ed; }
.zalo { background: #ad6527; box-shadow: inset 0 -2px #ff7a14; }
.zalo span { position: absolute; inset: 0; font: bold 6px/30px "Open Sans", sans-serif; color: #1a6be0; }
.cur { background: #57584f; }
.tray { margin-left: auto; display: flex; align-items: center; padding-right: 25px; font-size: 12px; }
.tray .clock { margin: 0 20px 0 13px; }
```
